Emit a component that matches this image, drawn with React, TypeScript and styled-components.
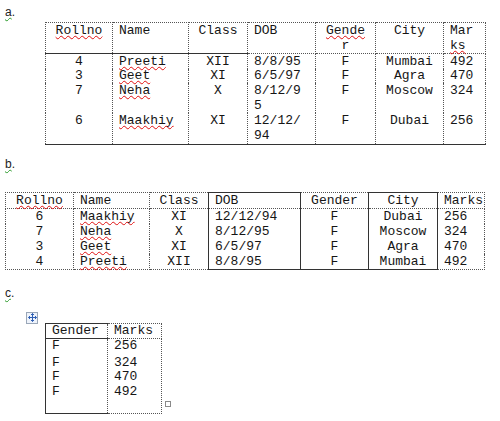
import styled, { createGlobalStyle, css } from "styled-components"

const GlobalStyle = createGlobalStyle`
body {
  margin: 0;
  background: #fff;
}
`

const Page = styled.div`
padding: 4px 5px 0 5px;
font-family: "Liberation Mono", "Courier New", monospace;
font-size: 13px;
color: #151515;
`

const Label = styled.div<{ $mt?: number }>`
font-family: "Liberation Sans", Arial, sans-serif;
font-size: 12px;
line-height: 16px;
height: 16px;
margin-top: ${p => p.$mt ?? 0}px;
color: #222;
`

const Grammar = styled.span`
text-decoration: underline wavy #2a9a2a;
text-decoration-thickness: 1px;
text-underline-offset: 1px;
`

const Typo = styled.span`
text-decoration: underline wavy #e01010;
text-decoration-thickness: 1px;
text-underline-offset: 1px;
text-decoration-skip-ink: none;
`

const TableBox = styled.div<{ $mt: number; $ml: number }>`
position: relative;
width: fit-content;
margin-top: ${p => p.$mt}px;
margin-left: ${p => p.$ml}px;
`

const Grid = styled.table<{ $w: number }>`
border-collapse: collapse;
table-layout: fixed;
width: ${p => p.$w}px;
font-family: "Liberation Mono", "Courier New", monospace;
font-size: 13px;
`

const Row = styled.tr<{ $h?: number; $lh?: number }>`
height: ${p => p.$h ?? 15}px;
line-height: ${p => p.$lh ?? 15}px;
`

const Cell = styled.td<{ $align?: "left" | "center"; $s?: string }>`
padding: 0 6px;
vertical-align: top;
white-space: nowrap;
overflow: visible;
text-align: ${p => p.$align ?? "left"};
border: 1px dotted #555;
${p => p.$s && css`
  ${p.$s.includes("t") ? "border-top: 1px solid #333;" : ""}
  ${p.$s.includes("r") ? "border-right: 1px solid #333;" : ""}
  ${p.$s.includes("b") ? "border-bottom: 1px solid #333;" : ""}
  ${p.$s.includes("l") ? "border-left: 1px solid #333;" : ""}
`}
`

const Body = styled.tbody`
& td {
  border-top-width: 0;
  border-bottom-width: 0;
}
& tr:last-child td {
  border-bottom-width: 1px;
}
`

const Line = styled.div<{ $mt?: number }>`
margin-top: ${p => p.$mt ?? 0}px;
line-height: 15px;
`

const MoveHandle = styled.div`
position: absolute;
left: -19px;
top: -11px;
width: 10px;
height: 10px;
border: 1px solid #9aa7b8;
background: #eef3fb;
display: flex;
align-items: center;
justify-content: center;
`

const ResizeHandle = styled.div`
position: absolute;
right: -9px;
bottom: 7px;
width: 4px;
height: 4px;
border: 1px solid #8a8a8a;
background: #fff;
`

const colsA = [67, 76, 59, 68, 60, 68, 42]
const colsB = [68, 76, 59, 92, 68, 69, 47]

export default function App() {
  return (
    <Page>
      <GlobalStyle />
      <Label><Grammar>a</Grammar>.</Label>
      <TableBox $mt={2} $ml={40}>
        <Grid $w={440}>
          <colgroup>
            {colsA.map((w, i) => <col key={i} style={{ width: w }} />)}
          </colgroup>
          <thead>
            <Row $h={30}>
              <Cell $align="center" $s="b"><Typo>Rollno</Typo></Cell>
              <Cell $s="b">Name</Cell>
              <Cell $align="center" $s="b">Class</Cell>
              <Cell>DOB</Cell>
              <Cell $align="center"><Typo>Gende</Typo><br />r</Cell>
              <Cell $align="center">City</Cell>
              <Cell>Mar<br /><Typo>ks</Typo></Cell>
            </Row>
          </thead>
          <Body>
            <Row $h={15}>
              <Cell $align="center">4</Cell>
              <Cell><Typo>Preeti</Typo></Cell>
              <Cell $align="center">XII</Cell>
              <Cell>8/8/95</Cell>
              <Cell $align="center">F</Cell>
              <Cell $align="center">Mumbai</Cell>
              <Cell>492</Cell>
            </Row>
            <Row $h={14} $lh={14}>
              <Cell $align="center">3</Cell>
              <Cell><Typo>Geet</Typo></Cell>
              <Cell $align="center">XI</Cell>
              <Cell>6/5/97</Cell>
              <Cell $align="center">F</Cell>
              <Cell $align="center">Agra</Cell>
              <Cell>470</Cell>
            </Row>
            <Row $h={30}>
              <Cell $align="center">7</Cell>
              <Cell><Typo>Neha</Typo></Cell>
              <Cell $align="center">X</Cell>
              <Cell>8/12/9<br />5</Cell>
              <Cell $align="center">F</Cell>
              <Cell $align="center">Moscow</Cell>
              <Cell>324</Cell>
            </Row>
            <Row $h={31}>
              <Cell $align="center" $s="b">6</Cell>
              <Cell $s="b"><Typo>Maakhiy</Typo></Cell>
              <Cell $align="center" $s="b">XI</Cell>
              <Cell $s="b">12/12/<br />94</Cell>
              <Cell $align="center" $s="b">F</Cell>
              <Cell $align="center" $s="b">Dubai</Cell>
              <Cell $s="b">256</Cell>
            </Row>
          </Body>
        </Grid>
      </TableBox>

      <Label $mt={11}><Grammar>b</Grammar>.</Label>
      <TableBox $mt={20} $ml={0}>
        <Grid $w={479}>
          <colgroup>
            {colsB.map((w, i) => <col key={i} style={{ width: w }} />)}
          </colgroup>
          <thead>
            <Row>
              <Cell $align="center"><Typo>Rollno</Typo></Cell>
              <Cell>Name</Cell>
              <Cell $align="center">Class</Cell>
              <Cell $s="tlr">DOB</Cell>
              <Cell $align="center">Gender</Cell>
              <Cell $align="center" $s="tlr">City</Cell>
              <Cell>Marks</Cell>
            </Row>
          </thead>
          <Body>
            <Row>
              <Cell $align="center">6</Cell>
              <Cell><Typo>Maakhiy</Typo></Cell>
              <Cell $align="center">XI</Cell>
              <Cell $s="tlr">12/12/94</Cell>
              <Cell $align="center">F</Cell>
              <Cell $align="center" $s="tlr">Dubai</Cell>
              <Cell>256</Cell>
            </Row>
            <Row>
              <Cell $align="center">7</Cell>
              <Cell><Typo>Neha</Typo></Cell>
              <Cell $align="center">X</Cell>
              <Cell $s="lr">8/12/95</Cell>
              <Cell $align="center">F</Cell>
              <Cell $align="center" $s="lr">Moscow</Cell>
              <Cell>324</Cell>
            </Row>
            <Row>
              <Cell $align="center">3</Cell>
              <Cell><Typo>Geet</Typo></Cell>
              <Cell $align="center">XI</Cell>
              <Cell $s="lr">6/5/97</Cell>
              <Cell $align="center">F</Cell>
              <Cell $align="center" $s="lr">Agra</Cell>
              <Cell>470</Cell>
            </Row>
            <Row>
              <Cell $align="center">4</Cell>
              <Cell><Typo>Preeti</Typo></Cell>
              <Cell $align="center">XII</Cell>
              <Cell $s="lrb">8/8/95</Cell>
              <Cell $align="center" $s="b">F</Cell>
              <Cell $align="center" $s="lrb">Mumbai</Cell>
              <Cell>492</Cell>
            </Row>
          </Body>
        </Grid>
      </TableBox>

      <Label $mt={15}><Grammar>c</Grammar>.</Label>
      <TableBox $mt={22} $ml={40}>
        <MoveHandle>
          <svg width="9" height="9" viewBox="0 0 9 9" fill="none" stroke="#2f5fb3" strokeWidth="1">
            <path d="M4.5 0.5v8M0.5 4.5h8" />
            <path d="M3 2l1.5-1.5L6 2M3 7l1.5 1.5L6 7M2 3L0.5 4.5L2 6M7 3l1.5 1.5L7 6" />
          </svg>
        </MoveHandle>
        <Grid $w={116}>
          <colgroup>
            <col style={{ width: 62 }} />
            <col style={{ width: 54 }} />
          </colgroup>
          <thead>
            <Row $h={14} $lh={14}>
              <Cell $s="tlb">Gender</Cell>
              <Cell>Marks</Cell>
            </Row>
          </thead>
          <Body>
            <Row $h={75}>
              <Cell $s="lb">
                <Line $mt={-1}>F</Line>
                <Line $mt={2}>F</Line>
                <Line $mt={-1}>F</Line>
                <Line>F</Line>
              </Cell>
              <Cell>
                <Line $mt={-1}>256</Line>
                <Line $mt={2}>324</Line>
                <Line $mt={-1}>470</Line>
                <Line>492</Line>
              </Cell>
            </Row>
          </Body>
        </Grid>
        <ResizeHandle />
      </TableBox>
    </Page>
  )
}
